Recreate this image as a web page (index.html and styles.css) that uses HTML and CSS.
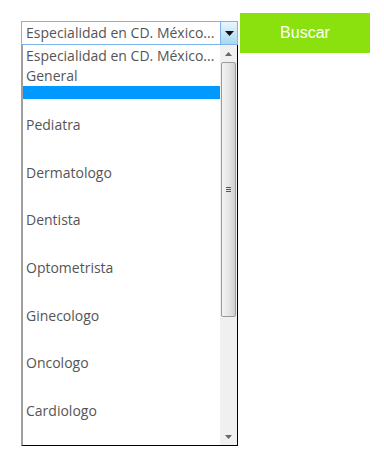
FILE: index.html
```html
<!DOCTYPE html>
<html lang="es">
<head>
    <meta charset="UTF-8">
    <meta name="viewport" content="width=device-width, initial-scale=1.0">
    <title>Buscar especialidad</title>
    <link rel="stylesheet" href="styles.css">
</head>
<body>
    <div class="search">
        <div class="picker">
            <div class="select">
                <span class="select-text">Especialidad en CD. México...</span>
                <span class="select-arrow">
                    <svg width="9" height="5" viewBox="0 0 9 5"><path d="M0 0h9L4.5 5z" fill="#111"/></svg>
                </span>
            </div>
            <div class="list">
                <ul class="options">
                    <li class="opt compact">Especialidad en CD. México...</li>
                    <li class="opt compact">General</li>
                    <li class="opt selected"></li>
                    <li class="opt">Pediatra</li>
                    <li class="opt">Dermatologo</li>
                    <li class="opt">Dentista</li>
                    <li class="opt">Optometrista</li>
                    <li class="opt">Ginecologo</li>
                    <li class="opt">Oncologo</li>
                    <li class="opt">Cardiologo</li>
                </ul>
                <div class="scrollbar">
                    <div class="scroll-btn">
                        <svg width="7" height="4" viewBox="0 0 7 4"><path d="M0 4h7L3.5 0z" fill="#666"/></svg>
                    </div>
                    <div class="track">
                        <div class="thumb">
                            <span class="grip"></span>
                        </div>
                    </div>
                    <div class="scroll-btn">
                        <svg width="7" height="4" viewBox="0 0 7 4"><path d="M0 0h7L3.5 4z" fill="#666"/></svg>
                    </div>
                </div>
            </div>
        </div>
        <button class="search-btn">Buscar</button>
    </div>
</body>
</html>
```

FILE: styles.css
```css
body {
    margin: 0;
    font-family: "Open Sans", sans-serif;
}
.search {
    display: flex;
    align-items: flex-start;
    padding: 13px 0 0 21px;
}
.picker {
    width: 217px;
    margin-top: 8px;
}
.select {
    display: flex;
    height: 24px;
    border: 1px solid #7eb4ea;
    box-sizing: border-box;
    background: #fff;
}
.select-text {
    flex: 1;
    padding-left: 4px;
    font-size: 14px;
    line-height: 22px;
    color: #555;
    white-space: nowrap;
    overflow: hidden;
}
.select-arrow {
    width: 16px;
    display: flex;
    align-items: center;
    justify-content: center;
    border-left: 1px solid #7eb4ea;
    background: linear-gradient(#eaf6fd, #a7d8f3);
}
.list {
    display: flex;
    height: 401px;
    border-left: 2px solid #a0a0a0;
    border-right: 1px solid #000;
    border-bottom: 1px solid #000;
    box-sizing: border-box;
    background: #fff;
}
.options {
    flex: 1;
    list-style: none;
    margin: 0;
    padding: 0;
    overflow: hidden;
}
.opt {
    height: 47.7px;
    padding-left: 3px;
    font-size: 14px;
    line-height: 47.7px;
    color: #555;
    white-space: nowrap;
}
.opt.compact {
    height: 20px;
    line-height: 20px;
}
.opt.compact:first-child {
    height: 21px;
    line-height: 22px;
}
.opt.selected {
    height: 13px;
    margin-bottom: 2px;
    background: #0099ff;
}
.scrollbar {
    width: 17px;
    display: flex;
    flex-direction: column;
    background: #f0f0f0;
}
.scroll-btn {
    height: 17px;
    display: flex;
    align-items: center;
    justify-content: center;
}
.track {
    flex: 1;
}
.thumb {
    height: 253px;
    margin: 0 1px;
    border: 1px solid #9a9a9a;
    border-radius: 2px;
    background: linear-gradient(to right, #f3f3f3, #e2e2e2 60%, #d0d0d0);
    display: flex;
    align-items: center;
    justify-content: center;
}
.grip {
    width: 5px;
    height: 5px;
    border-top: 1px solid #555;
    border-bottom: 1px solid #555;
    background: linear-gradient(#555, #555) center / 5px 1px no-repeat;
    box-sizing: border-box;
}
.search-btn {
    width: 130px;
    height: 40px;
    margin-left: 2px;
    border: none;
    background-color: #8ae10e;
    color: #fff;
    font-family: Arial, "Liberation Sans", sans-serif;
    font-size: 16px;
    cursor: pointer;
}
```
